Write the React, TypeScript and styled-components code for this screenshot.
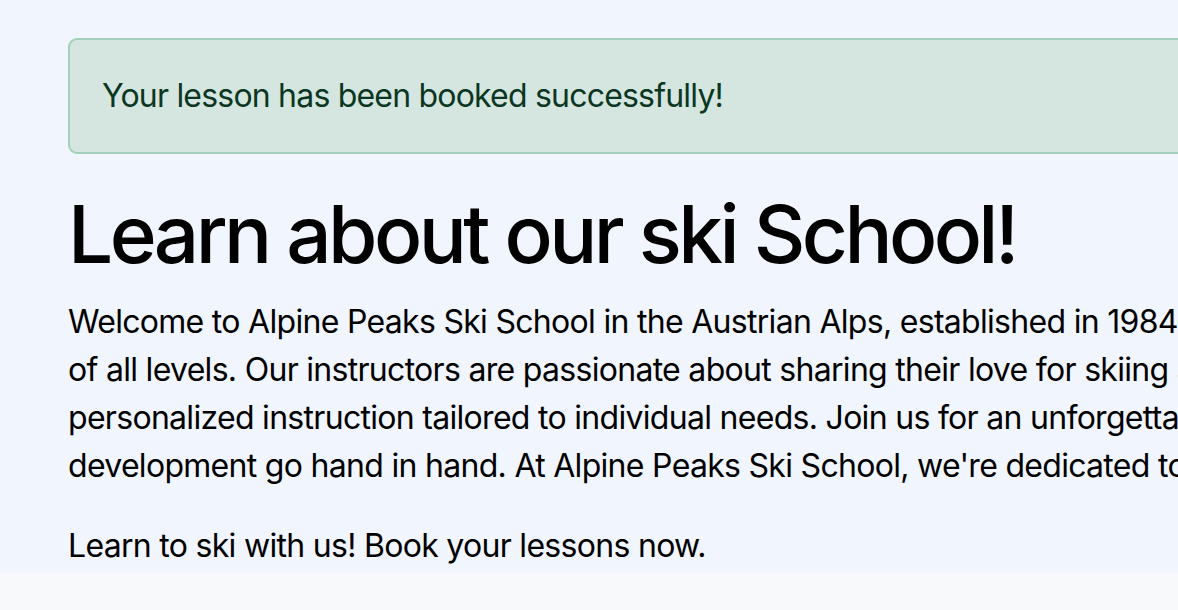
import React from "react";
import styled, { createGlobalStyle } from "styled-components";

const Global = createGlobalStyle`
  html, body {
    margin: 0;
    padding: 0;
    background: #f8f9fa;
    overflow: hidden;
  }
  body {
    font-family: Inter, "Liberation Sans", sans-serif;
    color: #000;
  }
`;

const Page = styled.div`
  background: #f1f5fe;
  padding: 38px 0 3px 68px;
  width: 1800px;
`;

const Alert = styled.div`
  box-sizing: border-box;
  width: 1700px;
  padding: 32px 32px;
  border: 2px solid #a3cfbb;
  border-radius: 9px;
  background: #d4e6df;
  color: #0a3622;
  font-size: 32px;
  line-height: 48px;
  letter-spacing: -0.8px;
  margin-bottom: 32px;
`;

const Title = styled.h1`
  margin: 0 0 16px;
  font-size: 80px;
  line-height: 96px;
  font-weight: 500;
  letter-spacing: -3.6px;
`;

const Paragraph = styled.p<{ $last?: boolean }>`
  margin: 0 0 ${(p) => (p.$last ? "0" : "32px")};
  font-size: 32px;
  line-height: 48px;
  letter-spacing: -0.7px;
  white-space: pre;
`;

const intro = `Welcome to Alpine Peaks Ski School in the Austrian Alps, established in 1984. We offer lessons for skiers
of all levels. Our instructors are passionate about sharing their love for skiing and provide expert,
personalized instruction tailored to individual needs. Join us for an unforgettable experience where fun and skill
development go hand in hand. At Alpine Peaks Ski School, we're dedicated to making your time memorable.`;

export default function App() {
  return (
    <>
      <Global />
      <Page>
        <Alert>Your lesson has been booked successfully!</Alert>
        <Title>Learn about our ski School!</Title>
        <Paragraph>{intro}</Paragraph>
        <Paragraph $last>Learn to ski with us! Book your lessons now.</Paragraph>
      </Page>
    </>
  );
}
